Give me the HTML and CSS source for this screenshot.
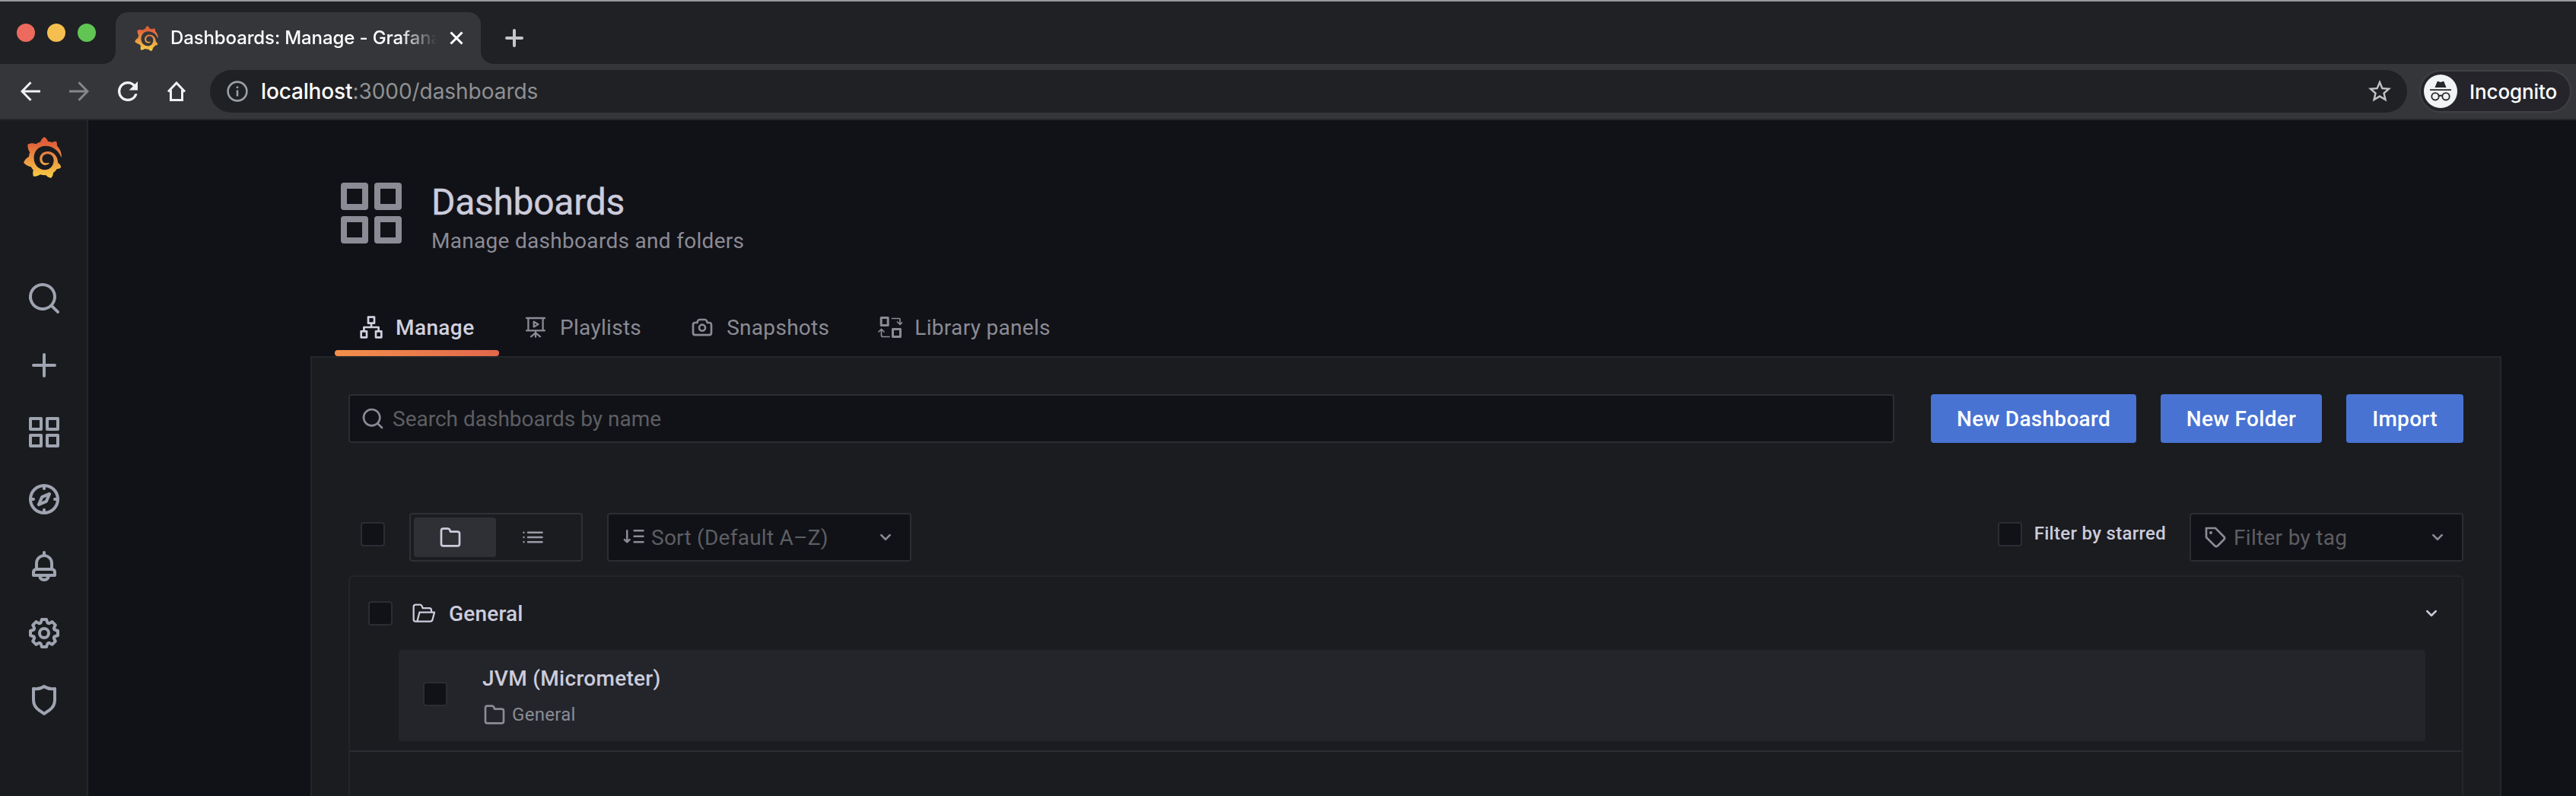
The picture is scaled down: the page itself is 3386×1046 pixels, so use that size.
FILE: index.html
```html
<!DOCTYPE html>
<html lang="en">
<head>
<meta charset="utf-8">
<title>Dashboards: Manage - Grafana</title>
<link rel="stylesheet" href="styles.css">
</head>
<body>
<svg class="sprite" aria-hidden="true">
  <defs>
    <linearGradient id="flame" x1="0" y1="0" x2="0" y2="1"><stop offset="0.15" stop-color="#e0603a"/><stop offset="0.55" stop-color="#ec9640"/><stop offset="1" stop-color="#f7cf46"/></linearGradient>
    <symbol id="logo" viewBox="0 0 24 24"><path fill="url(#flame)" d="M23.02 10.59a8.578 8.578 0 0 0-.862-3.034 8.911 8.911 0 0 0-1.789-2.445c.337-1.342-.413-2.505-.413-2.505-1.292-.08-2.113.4-2.416.62-.052-.02-.102-.044-.154-.064-.22-.089-.446-.172-.677-.247-.231-.073-.47-.14-.711-.197a9.867 9.867 0 0 0-.875-.161C14.557.753 12.94 0 12.94 0c-1.804 1.145-2.147 2.744-2.147 2.744l-.018.093c-.098.029-.2.057-.298.088-.138.042-.275.094-.413.143-.138.055-.275.107-.41.166a8.869 8.869 0 0 0-1.557.87l-.063-.029c-2.497-.955-4.716.195-4.716.195-.203 2.658.996 4.33 1.235 4.636a11.608 11.608 0 0 0-.607 2.635C1.636 12.677.953 15.014.953 15.014c1.926 2.214 4.171 2.351 4.171 2.351.003-.002.006-.002.006-.005.285.509.615.994.986 1.446.156.19.32.371.488.548-.704 2.009.099 3.68.099 3.68 2.144.08 3.553-.937 3.849-1.173a9.784 9.784 0 0 0 3.164.501h.08l.055-.003.107-.002.103-.005.003.002c1.01 1.44 2.788 1.646 2.788 1.646 1.264-1.332 1.337-2.653 1.337-2.94v-.058c0-.02-.003-.039-.003-.06.265-.187.52-.387.758-.6a7.875 7.875 0 0 0 1.415-1.7c1.43.083 2.437-.885 2.437-.885-.236-1.49-1.085-2.216-1.264-2.354L21 15.200C21 11.500 18.500 8.440 15 8.440C12.300 8.440 10.300 10.300 10.300 12.800C10.300 15.200 12 16.500 13.700 16.400C14.800 16.300 15.600 15.900 15.800 15.600C16 15.100 15.600 15 15.200 15.100C13 15.700 11.750 14.500 11.750 12.900C11.750 11 13.200 9.900 15 9.900C17.200 9.900 18.500 11.600 18.500 13.600C18.500 16.800 16.300 19.200 13.600 19.200C9.600 19.200 6.900 16 6.900 12.300C6.900 8.200 9.800 5.200 13.600 5.200C18 5.200 21.400 8 22.700 11.500Q23 11.900 23.050 11.400z"/></symbol>
    <symbol id="search" viewBox="0 0 24 24"><path d="M21.71,20.29,18,16.61A9,9,0,1,0,16.61,18l3.68,3.68a1,1,0,0,0,1.42,0A1,1,0,0,0,21.71,20.29ZM11,18a7,7,0,1,1,7-7A7,7,0,0,1,11,18Z"/></symbol>
    <symbol id="plus" viewBox="0 0 24 24"><path d="M19,11H13V5a1,1,0,0,0-2,0v6H5a1,1,0,0,0,0,2h6v6a1,1,0,0,0,2,0V13h6a1,1,0,0,0,0-2Z"/></symbol>
    <symbol id="apps" viewBox="0 0 24 24"><path d="M10,13H3a1,1,0,0,0-1,1v7a1,1,0,0,0,1,1h7a1,1,0,0,0,1-1V14A1,1,0,0,0,10,13ZM9,20H4V15H9ZM21,2H14a1,1,0,0,0-1,1v7a1,1,0,0,0,1,1h7a1,1,0,0,0,1-1V3A1,1,0,0,0,21,2ZM20,9H15V4h5Zm1,4H14a1,1,0,0,0-1,1v7a1,1,0,0,0,1,1h7a1,1,0,0,0,1-1V14A1,1,0,0,0,21,13Zm-1,7H15V15h5ZM10,2H3A1,1,0,0,0,2,3v7a1,1,0,0,0,1,1h7a1,1,0,0,0,1-1V3A1,1,0,0,0,10,2ZM9,9H4V4H9Z"/></symbol>
    <symbol id="compass" viewBox="0 0 24 24"><path d="M12,2A10,10,0,1,0,22,12,10,10,0,0,0,12,2Zm1,17.93V19a1,1,0,0,0-2,0v.93A8,8,0,0,1,4.07,13H5a1,1,0,0,0,0-2H4.07A8,8,0,0,1,11,4.07V5a1,1,0,0,0,2,0V4.07A8,8,0,0,1,19.93,11H19a1,1,0,0,0,0,2h.93A8,8,0,0,1,13,19.93ZM15.14,7.55l-5,2.12a1,1,0,0,0-.52.52l-2.12,5a1,1,0,0,0,.21,1.1,1,1,0,0,0,.7.29.93.93,0,0,0,.4-.09l5-2.12a1,1,0,0,0,.52-.52l2.12-5a1,1,0,0,0-1.31-1.3Zm-2.49,5.1-2.28,1,1-2.28,2.28-1Z"/></symbol>
    <symbol id="bell" viewBox="0 0 24 24"><path d="M18,13.18V10a6,6,0,0,0-5-5.91V3a1,1,0,0,0-2,0V4.09A6,6,0,0,0,6,10v3.18A3,3,0,0,0,4,16v2a1,1,0,0,0,1,1H8.14a4,4,0,0,0,7.72,0H19a1,1,0,0,0,1-1V16A3,3,0,0,0,18,13.18ZM8,10a4,4,0,0,1,8,0v3H8Zm4,10a2,2,0,0,1-1.72-1h3.44A2,2,0,0,1,12,20Zm6-3H6V16a1,1,0,0,1,1-1H17a1,1,0,0,1,1,1Z"/></symbol>
    <symbol id="cog" viewBox="0 0 24 24"><path d="M21.32,9.55l-1.89-.63.89-1.78A1,1,0,0,0,20.13,6L18,3.87a1,1,0,0,0-1.15-.19l-1.78.89-.63-1.89A1,1,0,0,0,13.5,2h-3a1,1,0,0,0-.95.68L8.92,4.57,7.14,3.68A1,1,0,0,0,6,3.87L3.87,6a1,1,0,0,0-.19,1.15l.89,1.78-1.89.63A1,1,0,0,0,2,10.5v3a1,1,0,0,0,.68.95l1.89.63-.89,1.78A1,1,0,0,0,3.87,18L6,20.13a1,1,0,0,0,1.15.19l1.78-.89.63,1.89a1,1,0,0,0,.95.68h3a1,1,0,0,0,.95-.68l.63-1.89,1.78.89A1,1,0,0,0,18,20.13L20.13,18a1,1,0,0,0,.19-1.15l-.89-1.78,1.89-.63A1,1,0,0,0,22,13.5v-3A1,1,0,0,0,21.32,9.55ZM20,12.78l-1.2.4A2,2,0,0,0,17.64,16l.57,1.14-1.1,1.1L16,17.64a2,2,0,0,0-2.79,1.16l-.4,1.2H11.22l-.4-1.2A2,2,0,0,0,8,17.64l-1.14.57-1.1-1.1L6.36,16A2,2,0,0,0,5.2,13.18L4,12.78V11.22l1.2-.4A2,2,0,0,0,6.36,8L5.79,6.89l1.1-1.1L8,6.36A2,2,0,0,0,10.82,5.2l.4-1.2h1.56l.4,1.2A2,2,0,0,0,16,6.36l1.14-.57,1.1,1.1L17.64,8a2,2,0,0,0,1.16,2.79l1.2.4ZM12,8a4,4,0,1,0,4,4A4,4,0,0,0,12,8Zm0,6a2,2,0,1,1,2-2A2,2,0,0,1,12,14Z"/></symbol>
    <symbol id="shield" viewBox="0 0 24 24"><path d="M19.63,3.65a1,1,0,0,0-.84-.2,8,8,0,0,1-6.22-1.27,1,1,0,0,0-1.14,0A8,8,0,0,1,5.21,3.45a1,1,0,0,0-.84.2A1,1,0,0,0,4,4.43v7.45a9,9,0,0,0,3.77,7.33l3.65,2.6a1,1,0,0,0,1.16,0l3.65-2.6A9,9,0,0,0,20,11.88V4.43A1,1,0,0,0,19.63,3.65ZM18,11.88a7,7,0,0,1-2.93,5.7L12,19.77,8.93,17.58A7,7,0,0,1,6,11.88V5.58a10,10,0,0,0,6-1.39,10,10,0,0,0,6,1.39Z"/></symbol>
    <symbol id="sitemap" viewBox="0 0 24 24"><path class="line" d="M9 2h6v6H9zM2 16h5.500v6H2zM16.500 16H22v6h-5.500zM12 8v4M4.800 16v-4h14.400v4"/></symbol>
    <symbol id="presentation" viewBox="0 0 24 24"><path class="line thin" d="M3 3h18M4.800 3v12.200h14.400V3M3 15.200h18M12 15.500v6M12 17.500l-4.500 3.700M12 17.500l4.500 3.700M10.300 6.500v5.200l4.300-2.600z"/></symbol>
    <symbol id="camera" viewBox="0 0 24 24"><path d="M19,6.5H17.720l-.32-1a3,3,0,0,0-2.840-2H9.440A3,3,0,0,0,6.600,5.550l-.32,1H5a3,3,0,0,0-3,3v8a3,3,0,0,0,3,3H19a3,3,0,0,0,3-3v-8A3,3,0,0,0,19,6.500Zm1,11a1,1,0,0,1-1,1H5a1,1,0,0,1-1-1v-8a1,1,0,0,1,1-1H7a1,1,0,0,0,1-.68l.54-1.640a1,1,0,0,1,.95-.68h5.120a1,1,0,0,1,.95.68l.54,1.640A1,1,0,0,0,17,8.500h2a1,1,0,0,1,1,1Zm-8-9a4,4,0,1,0,4,4A4,4,0,0,0,12,8.500Zm0,6a2,2,0,1,1,2-2A2,2,0,0,1,12,14.500Z"/></symbol>
    <symbol id="library" viewBox="0 0 32 32"><path class="line" style="stroke-width:3" d="M4.200 3.500h9v10h-9zM19.500 18.500h10v10h-10z"/><path class="line thin" d="M18.500 4.500h9.500q1 0 1 1V12M25.500 9l3.500 3.500L32.500 9M15 28.500H6.500q-2 0-2-2V19M1 22l3.500-3.500L8 22"/></symbol>
    <symbol id="folder" viewBox="0 0 24 24"><path d="M19,5.500H12.720l-.32-1a3,3,0,0,0-2.840-2H5a3,3,0,0,0-3,3v13a3,3,0,0,0,3,3H19a3,3,0,0,0,3-3V8.500A3,3,0,0,0,19,5.500Zm1,13a1,1,0,0,1-1,1H5a1,1,0,0,1-1-1V5.500a1,1,0,0,1,1-1H9.560a1,1,0,0,1,.95.680l.54,1.640A1,1,0,0,0,12,7.500h7a1,1,0,0,1,1,1Z"/></symbol>
    <symbol id="folder-open" viewBox="0 0 24 24"><path class="line thin" d="M5 20H4q-2 0-2-2V5.500q0-2 2-2h4.300q1.500 0 2 1.500l.6 1.800h6.600q2 0 2 2V11M5.500 20l2.300-9h14.700l-1.800 7q-.5 2-2.500 2z"/></symbol>
    <symbol id="list" viewBox="0 0 27 18"><path class="line" style="stroke-width:2.400" d="M7 2.700h18.600M7 9h18.600M7 15.300h18.600M1.500 2.700h.01M1.500 9h.01M1.500 15.300h.01"/></symbol>
    <symbol id="sort" viewBox="0 0 24 24"><path class="line" d="M12.500 5H22M12.500 11H22M12.500 17H22M5 5v12M2.300 14.500L5 17l2.700-2.500"/></symbol>
    <symbol id="tag" viewBox="0 0 24 24"><path d="M7.500,6A1.500,1.500,0,1,0,9,7.500,1.500,1.500,0,0,0,7.500,6Zm13.620,4.710L12.710,2.290A1,1,0,0,0,12,2H3A1,1,0,0,0,2,3v9a1,1,0,0,0,.29.710l8.420,8.410a3,3,0,0,0,4.240,0L21.120,15a3,3,0,0,0,0-4.240Zm-1.410,2.820h0l-6.180,6.170a1,1,0,0,1-1.410,0L4,11.590V4h7.590l8.120,8.120a1,1,0,0,1,.29.710A1,1,0,0,1,19.710,13.530Z"/></symbol>
    <symbol id="down" viewBox="0 0 24 24"><path d="M17,9.170a1,1,0,0,0-1.410,0L12,12.710,8.460,9.170a1,1,0,0,0-1.410,0,1,1,0,0,0,0,1.420l4.240,4.240a1,1,0,0,0,1.420,0L17,10.590A1,1,0,0,0,17,9.170Z"/></symbol>
    <symbol id="arrow" viewBox="0 0 26 26"><path class="line chrome" d="M26 13H2.500M13.500 1.200L2 13l11.500 11.800"/></symbol>
    <symbol id="reload" viewBox="0 0 16 16"><path d="M13.650 2.350A7.958 7.958 0 0 0 8 0a8 8 0 1 0 7.730 10h-2.080A5.990 5.990 0 0 1 8 14 6 6 0 1 1 8 2c1.660 0 3.140.69 4.220 1.780L9 7h7V0l-2.350 2.350z"/></symbol>
    <symbol id="home" viewBox="0 0 26 26"><path class="line chrome" d="M2 13.500L13 2l11 11.500M5.500 11v13.500h15V11"/></symbol>
    <symbol id="star" viewBox="0 0 24 24"><path d="M22 9.240l-7.190-.62L12 2 9.190 8.630 2 9.240l5.460 4.730L5.820 21 12 17.270 18.180 21l-1.630-7.030L22 9.240zM12 15.400l-3.760 2.270 1-4.280-3.320-2.880 4.380-.38L12 6.100l1.710 4.040 4.380.38-3.320 2.880 1 4.280L12 15.400z"/></symbol>
    <symbol id="incognito" viewBox="0 0 44 44"><circle cx="22" cy="22" r="22" fill="#f1f3f4"/><path fill="#26272a" d="M8 19.200h28v1.800H8zM14.500 17l3-7.600q.4-.9 1.400-.5l3.100 1 3.100-1q1-.4 1.400.5l3 7.600z"/><g fill="none" stroke="#26272a" stroke-width="1.800"><circle cx="15" cy="28.800" r="4.700"/><circle cx="29" cy="28.800" r="4.700"/><path d="M19.500 28.300q2.500-1.600 5 0"/></g></symbol>
  </defs>
</svg>

<header class="chrome-frame">
  <div class="tab-strip">
    <div class="lights"><i class="red"></i><i class="yellow"></i><i class="green"></i></div>
    <div class="browser-tab">
      <svg class="favicon"><use href="#logo"/></svg>
      <span class="tab-title">Dashboards: Manage - Grafana</span>
      <svg class="tab-close" viewBox="0 0 16 16"><path class="line chrome" d="M.5.500l15 15M15.500.500l-15 15"/></svg>
    </div>
    <svg class="tab-new" viewBox="0 0 24 24"><path class="line" style="stroke-width:4" d="M12 2v20M2 12h20"/></svg>
  </div>
  <div class="toolbar">
    <svg class="nav-btn"><use href="#arrow"/></svg>
    <svg class="nav-btn forward"><use href="#arrow"/></svg>
    <svg class="nav-btn"><use href="#reload"/></svg>
    <svg class="nav-btn"><use href="#home"/></svg>
    <div class="omnibox">
      <svg class="info" viewBox="0 0 28 28"><circle cx="14" cy="14" r="12.400" fill="none" stroke="#9aa0a6" stroke-width="2.600"/><path fill="#9aa0a6" d="M12.700 12.500h2.600v8h-2.600zM12.700 7.500h2.600v2.600h-2.600z"/></svg>
      <span class="url"><b>localhost</b>:3000/dashboards</span>
      <svg class="bookmark"><use href="#star"/></svg>
    </div>
    <div class="profile"><svg class="avatar"><use href="#incognito"/></svg><span>Incognito</span></div>
  </div>
</header>

<div class="app">
  <nav class="sidebar">
    <svg class="brand"><use href="#logo"/></svg>
    <div class="side-icons">
      <svg><use href="#search"/></svg>
      <svg><use href="#plus"/></svg>
      <svg><use href="#apps"/></svg>
      <svg><use href="#compass"/></svg>
      <svg><use href="#bell"/></svg>
      <svg><use href="#cog"/></svg>
      <svg><use href="#shield"/></svg>
    </div>
  </nav>
  <main class="page">
    <div class="page-header">
      <svg class="page-icon"><use href="#apps"/></svg>
      <div>
        <h1>Dashboards</h1>
        <p>Manage dashboards and folders</p>
      </div>
    </div>
    <div class="tabs">
      <div class="tab active"><svg><use href="#sitemap"/></svg><span>Manage</span></div>
      <div class="tab"><svg><use href="#presentation"/></svg><span>Playlists</span></div>
      <div class="tab"><svg><use href="#camera"/></svg><span>Snapshots</span></div>
      <div class="tab"><svg><use href="#library"/></svg><span>Library panels</span></div>
    </div>
    <section class="panel">
      <div class="actions">
        <div class="field search"><svg><use href="#search"/></svg><span>Search dashboards by name</span></div>
        <div class="btn new-dash">New Dashboard</div>
        <div class="btn new-folder">New Folder</div>
        <div class="btn import">Import</div>
      </div>
      <div class="filters">
        <i class="check"></i>
        <div class="view-switch">
          <div class="view on"><svg><use href="#folder"/></svg></div>
          <div class="view"><svg class="list"><use href="#list"/></svg></div>
        </div>
        <div class="field sort"><svg><use href="#sort"/></svg><span>Sort (Default A–Z)</span><svg class="caret"><use href="#down"/></svg></div>
        <i class="check starred"></i>
        <span class="starred-label">Filter by starred</span>
        <div class="field tags"><svg><use href="#tag"/></svg><span>Filter by tag</span><svg class="caret"><use href="#down"/></svg></div>
      </div>
      <div class="results">
        <div class="section">
          <div class="section-head">
            <i class="check"></i>
            <svg><use href="#folder-open"/></svg>
            <span>General</span>
            <svg class="caret"><use href="#down"/></svg>
          </div>
          <div class="item">
            <i class="check"></i>
            <div>
              <div class="item-title">JVM (Micrometer)</div>
              <div class="item-folder"><svg><use href="#folder"/></svg>General</div>
            </div>
          </div>
        </div>
      </div>
    </section>
  </main>
</div>
</body>
</html>
```
FILE: styles.css
```css
* { box-sizing: border-box; }
body {
  margin: 0;
  width: 3386px;
  height: 1046px;
  overflow: hidden;
  display: flex;
  flex-direction: column;
  background: #111217;
  color: #ccccdc;
  font: 400 28px/32px Roboto, "Liberation Sans", sans-serif;
  letter-spacing: 0.3px;
  white-space: nowrap;
}
svg { display: block; flex: none; fill: currentColor; overflow: visible; }
.sprite { position: absolute; width: 0; height: 0; }
.line { fill: none; stroke: currentColor; stroke-width: 2; stroke-linecap: round; stroke-linejoin: round; }
.line.thin { stroke-width: 1.7; }
.line.chrome { stroke-width: 3; stroke-linecap: butt; stroke-linejoin: miter; }

/* Browser frame */
.chrome-frame { flex: none; height: 158px; border-top: 2px solid #97999b; border-bottom: 2px solid #282828; background: #35363a; font-family: Inter, "Liberation Sans", sans-serif; letter-spacing: 0; color: #fff; }
.tab-strip { height: 82px; display: flex; align-items: flex-end; background: #202124; }
.lights { display: flex; gap: 16px; margin: 0 0 29px 22px; width: 130px; }
.lights i { width: 24px; height: 24px; border-radius: 50%; }
.red { background: #ed6a5e; }
.yellow { background: #f5bf4f; }
.green { background: #61c554; }
.browser-tab { position: relative; width: 480px; height: 68px; padding-left: 24px; display: flex; align-items: center; background: #35363a; border-radius: 16px 16px 0 0; }
.browser-tab::before, .browser-tab::after { content: ""; position: absolute; bottom: 0; width: 16px; height: 16px; }
.browser-tab::before { left: -16px; background: radial-gradient(circle at 0 0, #202124 15.500px, #35363a 16px); }
.browser-tab::after { right: -16px; background: radial-gradient(circle at 100% 0, #202124 15.500px, #35363a 16px); }
.favicon { width: 33px; height: 33px; }
.tab-title { width: 350px; margin-left: 15px; overflow: hidden; font-size: 24px; font-weight: 500; letter-spacing: -0.12px; -webkit-mask-image: linear-gradient(90deg, #000 86%, transparent); mask-image: linear-gradient(90deg, #000 86%, transparent); }
.tab-close { width: 16px; height: 16px; margin-left: 18px; }
.tab-new { width: 24px; height: 24px; margin: 0 0 22px 32px; color: #c4c6ca; }
.toolbar { height: 72px; padding-left: 27px; display: flex; align-items: center; color: #f1f1f2; }
.nav-btn { width: 26px; height: 26px; margin-right: 38px; }
.nav-btn.forward { transform: scaleX(-1); color: #86878a; }
.omnibox { width: 2888px; height: 56px; margin-left: -7px; padding: 0 18px 0 22px; display: flex; align-items: center; border-radius: 28px; background: #202124; color: #8e9194; }
.info { width: 28px; height: 28px; }
.url { margin-left: 17px; flex: 1; letter-spacing: -0.04px; }
.url b { font-weight: 500; letter-spacing: -0.15px; color: #fff; }
.bookmark { width: 36px; height: 36px; color: #c3c3c3; }
.profile { width: 200px; height: 56px; margin-left: 16px; padding-left: 4px; display: flex; align-items: center; border: 2px solid #3f3f44; border-radius: 28px; background: #25242a; color: #fff; font-size: 26px; font-weight: 500; letter-spacing: -0.1px; }
.profile span { padding-top: 2px; }
.avatar { width: 44px; height: 44px; margin-right: 16px; }

/* App shell */
.app { flex: 1; display: flex; min-height: 0; }
.sidebar { width: 116px; flex: none; background: #1a1b1f; border-right: 2px solid #25262a; color: #9fa4b1; }
.brand { width: 54px; height: 54px; margin: 22px 0 0 29px; }
.side-icons { margin: 134px 0 0 34px; display: flex; flex-direction: column; gap: 40px; }
.side-icons svg { width: 48px; height: 48px; }
.page { width: 2880px; margin-left: 292px; display: flex; flex-direction: column; }
.page-header { height: 224px; padding: 74px 0 0 32px; display: flex; color: #8b8b95; }
.page-icon { width: 96px; height: 96px; margin-right: 32px; }
h1 { margin: 5px 0 0; font-size: 48px; line-height: 58px; font-weight: 400; letter-spacing: -0.3px; color: #ccccdc; -webkit-text-stroke: 0.4px #ccccdc; }
.page-header p { margin: 0; line-height: 44px; }
.page-header > div { margin-left: -1px; }

.tabs { height: 86px; padding-left: 32px; display: flex; color: #8b8b95; }
.tab { height: 86px; padding: 10px 32px 0; display: flex; align-items: center; gap: 16px; }
.tab svg { width: 32px; height: 32px; }
.tab span { padding-top: 2px; }
.tab.active { width: 216px; color: #d0d0df; font-weight: 500; letter-spacing: 0.4px; position: relative; }
.tab.active::after { content: ""; position: absolute; left: 0; right: 0; bottom: 0; height: 8px; border-radius: 4px; background: linear-gradient(90deg, #f28f4b, #e3674c); }

.panel { flex: 1; min-height: 0; padding: 48px 48px 0; border: 2px solid #25262b; border-bottom: 0; background: #1b1c20; display: flex; flex-direction: column; }
.actions { display: flex; height: 64px; }
.field { height: 64px; padding: 0 18px; display: flex; align-items: center; border: 2px solid #2c2d33; border-radius: 4px; background: #111217; color: #5d5e63; }
.field svg { width: 32px; height: 32px; color: #8b8b95; }
.field span { padding-top: 2px; }
.field .caret { margin-left: auto; }
.search { width: 2032px; padding-left: 14px; margin-right: 48px; letter-spacing: 0; }
.search span { margin-left: 10px; }
.btn { padding-top: 2px; border-radius: 4px; background: #4873d3; color: #fff; font-weight: 500; letter-spacing: 0.3px; display: flex; align-items: center; justify-content: center; }
.new-dash { width: 270px; margin-right: 32px; }
.new-folder { width: 212px; margin-right: 32px; }
.import { width: 154px; }

.check { flex: none; width: 32px; height: 32px; border: 2px solid #2c2d33; border-radius: 4px; background: #111217; }
.filters { display: flex; align-items: center; height: 64px; margin-top: 92px; padding-left: 16px; }
.filters .check { margin-top: -8px; }
.view-switch { width: 228px; height: 64px; margin: 0 32px; padding: 4px; display: flex; border: 2px solid #2f3035; border-radius: 4px; }
.view { width: 108px; padding-right: 12px; display: flex; align-items: center; justify-content: center; border-radius: 4px; color: #9a9aa6; }
.view svg { width: 32px; height: 32px; }
.view.on { background: #2f3035; color: #ccccdc; }
.view .list { width: 27px; height: 18px; }
.sort { width: 400px; }
.sort svg:first-child { width: 30px; height: 30px; }
.sort span { margin-left: 8px; letter-spacing: 0.25px; }
.field.sort, .field.tags { padding-right: 16px; }
.starred { margin-left: auto; }
.starred-label { margin: -10px 31px 0 16px; font-size: 24px; font-weight: 500; letter-spacing: 0.3px; }
.tags { width: 360px; padding-left: 16px; }
.tags span { margin-left: 8px; }

.results { flex: 1; min-height: 0; margin-top: 18px; border: 2px solid #242529; border-bottom: 0; border-radius: 6px 6px 0 0; }
.section { height: 230px; border-bottom: 2px solid #2d2e33; }
.section-head { height: 96px; padding: 0 24px; display: flex; align-items: center; font-weight: 500; letter-spacing: 0.2px; }
.section-head svg { width: 32px; height: 32px; margin-left: 25px; }
.section-head span { padding-top: 2px; margin-left: 17px; }
.section-head .caret { margin-left: auto; }
.item { height: 120px; margin: 0 48px 0 64px; padding-left: 32px; display: flex; align-items: center; border-radius: 4px; background: #24252a; }
.item .check { margin: -4px 46px 0 0; }
.item-title { font-weight: 500; line-height: 36px; letter-spacing: 0.3px; }
.item-folder { margin-top: 13px; display: flex; align-items: center; gap: 7px; font-size: 24px; color: #8b8b95; }
.item-folder svg { width: 32px; height: 32px; }
```
